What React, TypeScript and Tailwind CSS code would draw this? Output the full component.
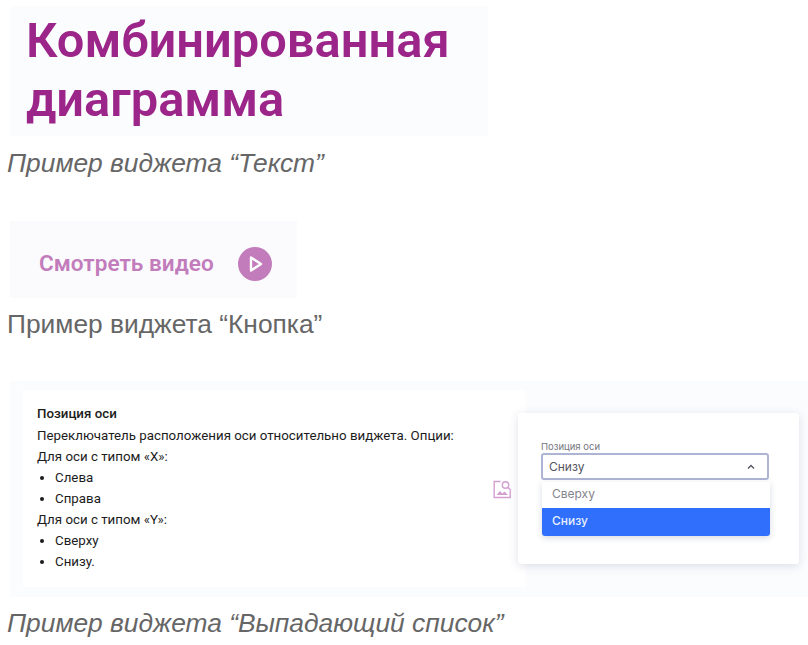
import React from "react";

function Caption({ children, italic, className }: { children: React.ReactNode; italic?: boolean; className: string }) {
  return (
    <p className={`ml-[7px] font-['Liberation_Sans',Arial,sans-serif] text-[26.35px] leading-[30px] text-[#666666] ${italic ? "italic" : ""} ${className}`}>
      {children}
    </p>
  );
}

function ImageSearchIcon() {
  return (
    <svg width="19" height="19" viewBox="0 0 19 19" fill="none" stroke="#d49fd0" strokeWidth="1.4" className="absolute left-[483px] top-[99px]">
      <path d="M7.5 1.5H1.2V17.5H17.2V11" />
      <circle cx="12.5" cy="5" r="3.2" />
      <path d="M15 7.5L18 10.5" />
      <path d="M3.5 15L7 11L9.5 13.5L11.5 11.5L15 15Z" fill="#d49fd0" stroke="none" />
    </svg>
  );
}

export default function App() {
  return (
    <div className="h-[645px] w-[808px] overflow-hidden bg-white pt-[6px]">
      <div className="ml-[10px] h-[130px] w-[478px] bg-[#fbfcfe] pl-[16px] pt-[5px] font-['Roboto',sans-serif] text-[48.8px] font-semibold leading-[59px] text-[#9b2589]">
        <div>Комбинированная</div>
        <div>диаграмма</div>
      </div>
      <Caption italic className="mt-[12px]">Пример виджета “Текст”</Caption>

      <div className="ml-[10px] mt-[43px] flex h-[77px] w-[287px] items-center bg-[#fbfbfe] pl-[29px] pt-[9px] font-['Roboto',sans-serif] text-[22.6px] font-semibold text-[#c27cbb]">
        <span>Смотреть видео</span>
        <span className="ml-[24px] flex h-[34px] w-[34px] items-center justify-center rounded-full bg-[#c27cbb]">
          <svg width="20" height="20" viewBox="0 0 20 20" fill="none" stroke="white" strokeWidth="2.4" strokeLinejoin="round">
            <path d="M6 3.5L16 10L6 16.5Z" />
          </svg>
        </span>
      </div>
      <Caption className="mt-[11px]">Пример виджета “Кнопка”</Caption>

      <div className="relative ml-[10px] mt-[42px] h-[216px] w-[798px] bg-[#fbfcfe] pl-[13px] pt-[9px]">
        <div className="h-[197px] w-[503px] bg-white pl-[14px] pt-[13px] font-['Roboto',sans-serif] text-[13.3px] leading-[21px] text-[#1c1c1c]">
          <div className="font-medium">Позиция оси</div>
          <div className="pt-px">Переключатель расположения оси относительно виджета. Опции:</div>
          <div>Для оси с типом «X»:</div>
          <ul className="list-disc pl-[18px]">
            <li>Слева</li>
            <li>Справа</li>
          </ul>
          <div>Для оси с типом «Y»:</div>
          <ul className="list-disc pl-[18px]">
            <li>Сверху</li>
            <li>Снизу.</li>
          </ul>
        </div>
        <ImageSearchIcon />
        <div className="absolute left-[508px] top-[32px] h-[151px] w-[281px] rounded-[3px] bg-white pl-[23px] pt-[27px] font-['Inter',sans-serif] shadow-[0_2px_10px_rgba(60,70,110,0.16)]">
          <div className="text-[9.5px] leading-[13px] text-[#77777f]">Позиция оси</div>
          <div className="flex h-[27px] w-[228px] items-center justify-between rounded-[3px] border-2 border-[#aeb4d4] pl-[6px] pr-[12px] text-[12px] text-[#555560]">
            <span>Снизу</span>
            <svg width="8" height="6" viewBox="0 0 8 6" fill="none" stroke="#555560" strokeWidth="1.4">
              <path d="M1 4.5L4 1.5L7 4.5" />
            </svg>
          </div>
          <div className="ml-px mt-[2px] w-[228px] overflow-hidden rounded-b-[3px] bg-white text-[12px] shadow-[0_2px_6px_rgba(60,70,110,0.2)]">
            <div className="flex h-[26px] items-center pb-[3px] pl-[10px] text-[#85858d]">Сверху</div>
            <div className="flex h-[28px] items-center bg-[#2f6ffb] pb-[3px] pl-[10px] font-medium text-[#e8efff]">Снизу</div>
          </div>
        </div>
      </div>
      <Caption italic className="mt-[11px]">Пример виджета “Выпадающий список”</Caption>
    </div>
  );
}
